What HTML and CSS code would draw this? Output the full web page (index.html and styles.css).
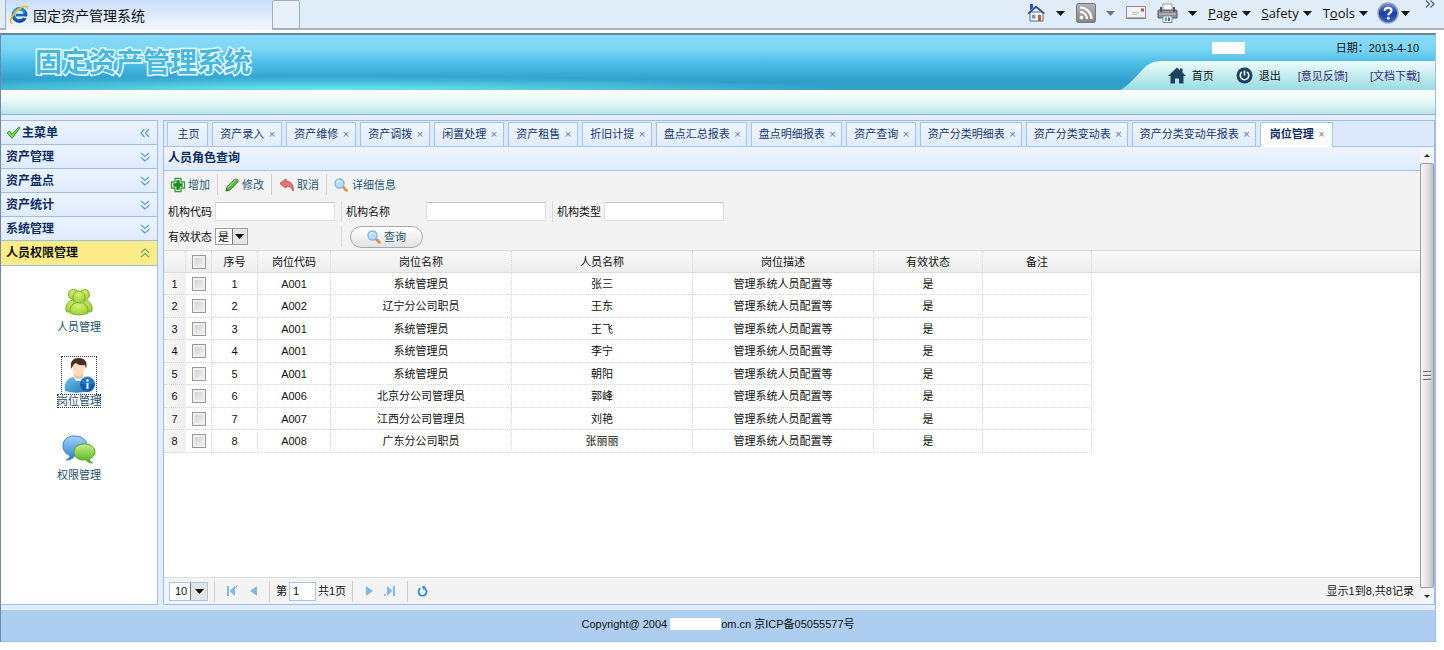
FILE: index.html
```html
<!DOCTYPE html>
<html lang="zh-CN">
<head>
<meta charset="utf-8">
<title>固定资产管理系统</title>
<link rel="stylesheet" href="styles.css">
</head>
<body>
<svg class="defs" aria-hidden="true">
  <defs>
    <radialGradient id="g-ie" cx=".4" cy=".3" r=".8"><stop offset="0" stop-color="#7fd6ff"/><stop offset=".6" stop-color="#1b7fd0"/><stop offset="1" stop-color="#0b3f93"/></radialGradient>
    <linearGradient id="g-help" x1="0" y1="0" x2="0" y2="1"><stop offset="0" stop-color="#6f93dc"/><stop offset=".5" stop-color="#1d3f9f"/><stop offset="1" stop-color="#3568c8"/></linearGradient>
    <linearGradient id="g-grey" x1="0" y1="0" x2="0" y2="1"><stop offset="0" stop-color="#b5b5b5"/><stop offset="1" stop-color="#858585"/></linearGradient>
    <linearGradient id="g-nav" x1="0" y1="0" x2="0" y2="1"><stop offset="0" stop-color="#effcfc"/><stop offset="1" stop-color="#98dce2"/></linearGradient>
    <radialGradient id="g-green" cx=".45" cy=".25" r=".8"><stop offset="0" stop-color="#d5f06c"/><stop offset="1" stop-color="#9ad03a"/></radialGradient>
    <linearGradient id="g-blue" x1="0" y1="0" x2="0" y2="1"><stop offset="0" stop-color="#a4d3f8"/><stop offset="1" stop-color="#2a7bd0"/></linearGradient>
    <linearGradient id="g-chat" x1="0" y1="0" x2="0" y2="1"><stop offset="0" stop-color="#c6ee8c"/><stop offset="1" stop-color="#4fae1c"/></linearGradient>
    <linearGradient id="g-shirt" x1="0" y1="0" x2="1" y2="1"><stop offset="0" stop-color="#6fc3ea"/><stop offset="1" stop-color="#1d74b0"/></linearGradient>
    <symbol id="i-arrow" viewBox="0 0 9 5"><path d="M0 0h9L4.500 5z" fill="currentColor"/></symbol>
    <symbol id="i-down" viewBox="0 0 10 10"><path d="M1 1l4 3.500L9 1M1 5.500L5 9l4-3.500" fill="none" stroke="currentColor" stroke-width="1.200"/></symbol>
    <symbol id="i-find" viewBox="0 0 14 14"><path d="M8.500 8.500l4 4" stroke="#d99345" stroke-width="2.600" stroke-linecap="round"/><circle cx="5.500" cy="5.500" r="4.500" fill="#b5ddfa" stroke="#8cb4dc" stroke-width="1.400"/><path d="M3 5a3 3 0 0 1 3-2.500" fill="none" stroke="#fff" stroke-width="1.200"/></symbol>
  </defs>
</svg>

<header class="browser">
  <div class="browser-tab">
    <svg class="ie" viewBox="0 0 20 20"><circle cx="10.500" cy="10" r="6" fill="none" stroke="url(#g-ie)" stroke-width="3.800"/><path d="M7 8.800h9.500v2.600H7z" fill="#1568b8"/><path d="M13 11.600h6v2l-4-.5z" fill="#dcebfb"/><path d="M3 18.500C-1 17 4 8 10 4c4-3 9-4 8.500 0" fill="none" stroke="#eeb92f" stroke-width="1.700"/></svg>
    <span>固定资产管理系统</span>
  </div>
  <div class="browser-newtab"></div>
  <nav class="browser-tools" aria-label="浏览器">
    <button class="btool"><svg width="20" height="20" viewBox="0 0 20 20"><path d="M4 9h13v9H4z" fill="#f4f6fb" stroke="#5c6678"/><path d="M1.500 10L10 2.500 19 10l-1.500 1L10 5 3 11z" fill="#2f4f9d"/><path d="M4 1h3v4L4 7.500z" fill="#2f4fb3"/><path d="M6 12h3.500v3.500H6z" fill="#6d98c7"/><path d="M12 12h3v6h-3z" fill="#b95f35"/></svg><svg class="caret"><use href="#i-arrow"/></svg></button>
    <button class="btool btool-off"><svg width="20" height="20" viewBox="0 0 20 20"><rect x=".5" y=".5" width="19" height="19" rx="2" fill="url(#g-grey)" stroke="#777"/><circle cx="5.500" cy="14.500" r="1.900" fill="#fff"/><path d="M4 9a7 7 0 0 1 7 7M4 4.500A11.500 11.500 0 0 1 15.500 16" fill="none" stroke="#fff" stroke-width="2.200"/></svg><svg class="caret"><use href="#i-arrow"/></svg></button>
    <button class="btool"><svg width="20" height="20" viewBox="0 0 20 20"><path d="M.5 3.500h19v12H.5z" fill="#f2f2f2" stroke="#8e8e8e"/><path d="M1 15h18" stroke="#777"/><path d="M15 5.500h3v3h-3z" fill="#e14b44"/><path d="M6 9.500h7M6 11.500h5" stroke="#c4c4c4"/></svg></button>
    <button class="btool"><svg width="21" height="20" viewBox="0 0 21 20"><path d="M6 1h9v7H6z" fill="#fdfdfd" stroke="#9b9b9b"/><path d="M1 8q0-1 1-1h17q1 0 1 1v7H1z" fill="#8e8e94" stroke="#5d5d63"/><path d="M3 4h2v5H3zM16 4h2v5h-2z" fill="#55555b"/><path d="M2 11h17" stroke="#c9c9ce"/><path d="M6 13h9v6.500H6z" fill="#f4fbff" stroke="#888"/><path d="M8 14.500h2V18H8z" fill="#38a5c8"/><path d="M11 14.500h2V18h-2z" fill="#3a6fae"/></svg><svg class="caret"><use href="#i-arrow"/></svg></button>
    <button class="btool btool-text"><span><u>P</u>age</span><svg class="caret"><use href="#i-arrow"/></svg></button>
    <button class="btool btool-text"><span><u>S</u>afety</span><svg class="caret"><use href="#i-arrow"/></svg></button>
    <button class="btool btool-text"><span>T<u>o</u>ols</span><svg class="caret"><use href="#i-arrow"/></svg></button>
    <button class="btool btool-help" aria-label="帮助"><svg width="22" height="22" viewBox="0 0 22 22"><circle cx="11" cy="11" r="10" fill="url(#g-help)" stroke="#9aa3b5" stroke-width="1.500"/><path d="M7.800 8.700C7.800 4.800 14.500 4.800 14.500 8.500c0 2.500-3.200 2.400-3.200 4.800" fill="none" stroke="#fff" stroke-width="2.200"/><circle cx="11.300" cy="16.200" r="1.400" fill="#fff"/></svg><svg class="caret"><use href="#i-arrow"/></svg></button>
    <button class="btool btool-more" aria-label="更多"><svg width="10" height="8" viewBox="0 0 10 8"><path d="M1 .5L4.500 4 1 7.500M5.500.5L9 4 5.500 7.500" fill="none" stroke="#4d5c7c" stroke-width="1.200"/></svg></button>
  </nav>
</header>

<div class="app">
  <div class="banner">
    <h1 class="logo">固定资产管理系统</h1>
    <div class="banner-side">
      <div class="who"><span class="mask"></span><span>日期：2013-4-10</span></div>
      <nav class="quick">
        <svg class="quick-bg" viewBox="0 0 314 29" preserveAspectRatio="none"><path d="M0 29C11 21 16 14 23 7Q30 0 40 0H314V29z" fill="url(#g-nav)"/></svg>
        <a class="quick-link" href="#"><svg width="18" height="17" viewBox="0 0 18 17"><path d="M0 9L9 .5l3 2.800V1.500h2.500v4L18 9h-2.500v7.500h-4.500v-5H7v5H2.500V9z" fill="#1c4260"/></svg>首页</a>
        <a class="quick-link" href="#"><svg width="17" height="17" viewBox="0 0 17 17"><circle cx="8.500" cy="8.500" r="8" fill="#1c4260"/><path d="M6 4.900a4.300 4.300 0 1 0 5 0" fill="none" stroke="#e8f8fa" stroke-width="1.600"/><path d="M8.500 3.500v5" stroke="#e8f8fa" stroke-width="1.600"/></svg>退出</a>
        <a class="quick-text" href="#">[意见反馈]</a>
        <a class="quick-text" href="#">[文档下载]</a>
      </nav>
    </div>
  </div>
  <div class="strip"></div>

  <div class="work">
    <aside class="side">
      <button class="acc acc-head"><svg width="15" height="13" viewBox="0 0 15 13"><path d="M1 7L3.500 5l2.300 3L13 1l1.200.8L6 12.300z" fill="#7ad646" stroke="#3f9a34"/></svg><span>主菜单</span><svg class="chev chev-left"><use href="#i-down"/></svg></button>
      <button class="acc"><span>资产管理</span><svg class="chev"><use href="#i-down"/></svg></button>
      <button class="acc"><span>资产盘点</span><svg class="chev"><use href="#i-down"/></svg></button>
      <button class="acc"><span>资产统计</span><svg class="chev"><use href="#i-down"/></svg></button>
      <button class="acc"><span>系统管理</span><svg class="chev"><use href="#i-down"/></svg></button>
      <button class="acc acc-open"><span>人员权限管理</span><svg class="chev chev-up"><use href="#i-down"/></svg></button>
      <div class="shortcuts">
        <a class="short" href="#"><span class="pic"><svg width="28" height="28" viewBox="0 0 28 28"><g fill="url(#g-green)" stroke="#7fae28"><circle cx="8.500" cy="6.500" r="5"/><circle cx="19.500" cy="6.500" r="5"/><path d="M1 23c-1-8 4-11 8-11v12H2zM27 23c1-8-4-11-8-11v12h7z"/><path d="M5.500 25.500C4 18 8 14.500 14 14.500s10 3.500 8.500 11q-8.500 3-17 0z"/><circle cx="14" cy="9" r="6"/></g></svg></span><span class="cap">人员管理</span></a>
        <a class="short short-focus" href="#"><span class="pic"><svg width="32" height="36" viewBox="0 0 32 36"><path d="M2 33c-2-10 5-15 13-14 8 0 12 5 13 13q-13 5-26 1z" fill="url(#g-shirt)"/><path d="M11 15h9v5q-5 4-9 0z" fill="#f1c39c"/><path d="M10 19q5 4 11 0l-2 4h-6z" fill="#dff0fa"/><ellipse cx="15.500" cy="10" rx="6" ry="8" fill="#fbdcc0"/><path d="M8.500 11C6 3 11 0 16 0c6 0 9 4 7 11l-1-4q-6 1-9-2-3 1-4.500 6z" fill="#4a2c20"/><circle cx="24.500" cy="26.500" r="7.500" fill="#0f5fb0"/><path d="M17.500 25a7 7 0 0 1 14 0q-7 3-14 0z" fill="#3c8fd8" opacity=".5"/><path d="M24.500 25v6" stroke="#fff" stroke-width="2"/><circle cx="24.500" cy="22.500" r="1.200" fill="#fff"/></svg></span><span class="cap">岗位管理</span></a>
        <a class="short" href="#"><span class="pic"><svg width="34" height="30" viewBox="0 0 34 30"><path d="M12 1C5 1 1 5.500 1 11c0 4.500 3 8 7 9.500 0 2-1.500 3.500-4 4.500 4 0 7-1.500 8.500-4C20 21 25 17 25 11S20 1 12 1z" fill="url(#g-blue)" stroke="#3a80c8"/><path d="M22.500 9C16 9 12 12.500 12 17s4 8 9.500 8q1 0 2-.2c2 2 4 3.200 7 3.200-2-1-3-2.500-3-4.200 3.500-1.500 5.500-4 5.500-6.800 0-4.500-4-8-10.500-8z" fill="url(#g-chat)" stroke="#54a524"/></svg></span><span class="cap">权限管理</span></a>
      </div>
    </aside>

    <main class="panel">
      <div class="tabs">
        <button class="tab tab-home">主页</button>
        <button class="tab tab-s">资产录入<i>×</i></button>
        <button class="tab tab-s">资产维修<i>×</i></button>
        <button class="tab tab-s">资产调拨<i>×</i></button>
        <button class="tab tab-s">闲置处理<i>×</i></button>
        <button class="tab tab-s">资产租售<i>×</i></button>
        <button class="tab tab-s">折旧计提<i>×</i></button>
        <button class="tab tab-m">盘点汇总报表<i>×</i></button>
        <button class="tab tab-m">盘点明细报表<i>×</i></button>
        <button class="tab tab-s">资产查询<i>×</i></button>
        <button class="tab tab-l">资产分类明细表<i>×</i></button>
        <button class="tab tab-l">资产分类变动表<i>×</i></button>
        <button class="tab tab-xl">资产分类变动年报表<i>×</i></button>
        <button class="tab tab-on">岗位管理<i>×</i></button>
      </div>
      <div class="frame">
        <section class="page">
          <h2 class="title">人员角色查询</h2>
          <div class="tools">
            <button class="tool"><svg width="16" height="16" viewBox="0 0 16 16"><path d="M5 1.500h6V5h3.500v6H11v3.500H5V11H1.500V5H5z" fill="#fff" stroke="#3c9a3c" stroke-width="1.300" stroke-linejoin="round"/><path d="M6.300 3.300h3.400v3h3v3.400h-3v3H6.300v-3h-3V6.300h3z" fill="#1c8c1c"/></svg>增加</button>
            <button class="tool tool-edit"><svg width="14" height="14" viewBox="0 0 14 14"><path d="M1 13l1-4 7.500-7.500q2-1 3 0t.2 2.700L5 12z" fill="#62b846" stroke="#2f8425"/><path d="M3 9.500l8-8" stroke="#b5e49f"/><path d="M1 13l.6-2 1.400 1.300z" fill="#333"/></svg>修改</button>
            <button class="tool"><svg width="16" height="14" viewBox="0 0 16 14"><path d="M1 5.500L7 1v2.300c5 .2 8 4 7 9.700-1-3.500-3-5-7-5V10z" fill="#ea7a74" stroke="#bf4540"/></svg>取消</button>
            <button class="tool tool-info"><svg width="14" height="14"><use href="#i-find"/></svg>详细信息</button>
          </div>
          <form class="query">
            <div class="cell cell-a"><label for="code">机构代码</label><input class="text" id="code" type="text"></div>
            <div class="cell cell-b"><label for="name">机构名称</label><input class="text" id="name" type="text"></div>
            <div class="cell cell-c"><label for="type">机构类型</label><input class="text" id="type" type="text"></div>
            <div class="cell cell-a"><label for="valid">有效状态</label><span class="pick"><select id="valid"><option>是</option><option>否</option></select><svg><use href="#i-arrow"/></svg></span></div>
            <div class="cell cell-go"><button class="go" type="button"><svg width="14" height="14"><use href="#i-find"/></svg>查询</button></div>
          </form>
          <div class="grid">
            <table>
              <colgroup><col class="c-n"><col class="c-k"><col class="c-i"><col class="c-code"><col class="c-w"><col class="c-w"><col class="c-w"><col class="c-v"><col class="c-v"><col></colgroup>
              <thead><tr><th></th><th><input type="checkbox" aria-label="全选"></th><th>序号</th><th>岗位代码</th><th>岗位名称</th><th>人员名称</th><th>岗位描述</th><th>有效状态</th><th>备注</th><th class="rest"></th></tr></thead>
              <tbody>
                <tr><td>1</td><td><input type="checkbox" aria-label="选择 1"></td><td>1</td><td>A001</td><td>系统管理员</td><td>张三</td><td>管理系统人员配置等</td><td>是</td><td></td></tr>
                <tr><td>2</td><td><input type="checkbox" aria-label="选择 2"></td><td>2</td><td>A002</td><td>辽宁分公司职员</td><td>王东</td><td>管理系统人员配置等</td><td>是</td><td></td></tr>
                <tr><td>3</td><td><input type="checkbox" aria-label="选择 3"></td><td>3</td><td>A001</td><td>系统管理员</td><td>王飞</td><td>管理系统人员配置等</td><td>是</td><td></td></tr>
                <tr><td>4</td><td><input type="checkbox" aria-label="选择 4"></td><td>4</td><td>A001</td><td>系统管理员</td><td>李宁</td><td>管理系统人员配置等</td><td>是</td><td></td></tr>
                <tr><td>5</td><td><input type="checkbox" aria-label="选择 5"></td><td>5</td><td>A001</td><td>系统管理员</td><td>朝阳</td><td>管理系统人员配置等</td><td>是</td><td></td></tr>
                <tr><td>6</td><td><input type="checkbox" aria-label="选择 6"></td><td>6</td><td>A006</td><td>北京分公司管理员</td><td>郭峰</td><td>管理系统人员配置等</td><td>是</td><td></td></tr>
                <tr><td>7</td><td><input type="checkbox" aria-label="选择 7"></td><td>7</td><td>A007</td><td>江西分公司管理员</td><td>刘艳</td><td>管理系统人员配置等</td><td>是</td><td></td></tr>
                <tr><td>8</td><td><input type="checkbox" aria-label="选择 8"></td><td>8</td><td>A008</td><td>广东分公司职员</td><td>张丽丽</td><td>管理系统人员配置等</td><td>是</td><td></td></tr>
              </tbody>
            </table>
          </div>
          <div class="pager">
            <span class="pick pick-size"><select aria-label="每页条数"><option>10</option><option>20</option></select><svg><use href="#i-arrow"/></svg></span>
            <span class="sep"></span>
            <button class="pg pg-wide" aria-label="首页"><svg width="12" height="12" viewBox="0 0 12 12"><path d="M1 1h2v10H1zM9 1v10L3.500 6z" fill="#7fb9e6"/><path d="M9.500 2.500l2-1.500" stroke="#777"/></svg></button>
            <button class="pg" aria-label="上一页"><svg width="7" height="10" viewBox="0 0 7 10"><path d="M7 0v10L0 5z" fill="#7fb9e6"/></svg></button>
            <span class="sep"></span>
            <label class="pageno">第<input type="text" value="1">共1页</label>
            <span class="sep"></span>
            <button class="pg" aria-label="下一页"><svg width="7" height="10" viewBox="0 0 7 10"><path d="M0 0v10l7-5z" fill="#7fb9e6"/></svg></button>
            <button class="pg pg-wide" aria-label="末页"><svg width="12" height="12" viewBox="0 0 12 12"><path d="M9 1h2v10H9zM3 1v10l5.500-5z" fill="#7fb9e6"/><path d="M0 10h2" stroke="#777"/></svg></button>
            <span class="sep"></span>
            <button class="pg" aria-label="刷新"><svg width="11" height="11" viewBox="0 0 11 11"><path d="M3.500 2.300a4 4 0 1 0 4 0" fill="none" stroke="#2f83c9" stroke-width="1.700"/><path d="M5 0l4 .5L6.500 4z" fill="#2f83c9"/></svg></button>
            <span class="total">显示1到8,共8记录</span>
          </div>
        </section>
        <div class="scroll"><span class="nub"><svg width="6" height="3" viewBox="0 0 6 3"><path d="M0 3h6L3 0z" fill="#333"/></svg></span><span class="thumb"><i></i><i></i><i></i></span><span class="nub"><svg width="6" height="3" viewBox="0 0 6 3"><path d="M0 0h6L3 3z" fill="#333"/></svg></span></div>
      </div>
    </main>
  </div>

  <footer class="foot"><span>Copyright@ 2004</span><span class="mask"></span><span>om.cn 京ICP备05055577号</span></footer>
</div>
</body>
</html>
```
FILE: styles.css
```css
* { box-sizing: border-box; }
body {
  margin: 0;
  background: #fff;
  font: 11px/14px "Liberation Sans", "Noto Sans CJK SC", sans-serif;
  color: #111;
  display: flex;
  flex-direction: column;
  min-height: 100vh;
}
button, input, select { font: inherit; color: inherit; margin: 0; }
button { border: 0; background: none; padding: 0; display: flex; align-items: center; }
a { color: inherit; text-decoration: none; }
svg { flex: none; display: block; }
.defs { position: absolute; width: 0; height: 0; }

/* browser chrome */
.browser {
  display: flex;
  height: 33px;
  padding: 0 9px 3px 5px;
  background: linear-gradient(#e1ecf9 0 28px, #a9b3c2 28px 30px, #fff 30px);
}
.browser-tab {
  width: 267px;
  height: 30px;
  padding-left: 3px;
  display: flex;
  align-items: center;
  gap: 4px;
  border-left: 1px solid #a3adbb;
  background: linear-gradient(#c9defa, #f3f8fe);
  font: 14px/20px "Noto Sans CJK SC", sans-serif;
}
.ie { width: 20px; height: 20px; }
.browser-newtab {
  width: 28px;
  height: 29px;
  border: 1px solid #a3adbb;
  border-radius: 2px;
  background: #e8f0fa;
}
.browser-tools {
  flex: 1;
  height: 26px;
  display: flex;
  justify-content: flex-end;
  align-items: center;
  gap: 11px;
}
.btool { gap: 10px; font: 13px/18px "Open Sans", sans-serif; }
.btool-text { gap: 4px; }
.btool-help { gap: 2px; margin-left: -2px; }
.btool-off .caret { color: #777; }
.btool-more { align-self: flex-start; margin-left: 4px; }
.caret { width: 9px; height: 5px; color: #111; }

/* page shell */
.app {
  flex: 1;
  display: flex;
  flex-direction: column;
  margin: 0 8px 8px 0;
  border: 1px solid #9dbde0;
  border-top: 2px solid #6b8298;
  border-left-color: #7088aa;
  background: #e3edfb;
}
.banner {
  height: 55px;
  display: flex;
  justify-content: space-between;
  background:
    radial-gradient(ellipse 500px 14px at 330px 100%, #6ae9f2, transparent),
    linear-gradient(#86dcf9, #7dd5f4 25%, #4dbfe6 50%, #2d9dca 85%, #35a3c8);
}
.logo {
  margin: 7px 0 0 34px;
  font: 700 27px/38px "Noto Sans CJK SC", sans-serif;
  color: #48b7de;
  -webkit-text-stroke: 3px #e6f9ff;
  paint-order: stroke fill;
}
.banner-side { display: flex; flex-direction: column; align-items: flex-end; }
.who { height: 26px; padding-right: 16px; display: flex; align-items: center; gap: 91px; }
.mask { background: #fff; width: 33px; height: 12px; }
.quick {
  position: relative;
  width: 314px;
  height: 29px;
  padding-right: 15px;
  display: flex;
  justify-content: flex-end;
  align-items: center;
  gap: 22px;
}
.quick-bg { position: absolute; inset: 0; width: 100%; height: 100%; }
.quick-link { position: relative; display: flex; align-items: center; gap: 6px; }
.quick-text { position: relative; color: #3d2a78; }
.quick-text:nth-of-type(3) { margin-left: -5px; }
.strip {
  height: 25px;
  border-bottom: 1px solid #8fb4c4;
  background: linear-gradient(#fdffff, #e6f7f7 50%, #b7e3e8);
}
.work { flex: 1; display: flex; gap: 5px; margin: 5px 0; }

/* accordion menu */
.side {
  width: 157px;
  border: 1px solid #9dbfe6;
  border-left: 0;
  background: #fff;
}
.acc {
  width: 100%;
  height: 24px;
  padding: 0 7px 0 5px;
  justify-content: space-between;
  border-bottom: 1px solid #9dbfe6;
  background: linear-gradient(#ecf3fe, #dfebfd);
  font-weight: 700;
  font-size: 12px;
  color: #0e2d5f;
}
.acc-head { gap: 1px; justify-content: flex-start; }
.acc-head .chev { margin-left: auto; }
.acc-open { height: 25px; background: #fbec88; color: #111; }
.chev { width: 10px; height: 10px; color: #5f9fd6; }
.chev-left { transform: rotate(90deg); }
.chev-up { transform: rotate(180deg); color: #7aa05c; }
.shortcuts { padding-top: 16px; display: flex; flex-direction: column; align-items: center; gap: 22px; }
.short { display: flex; flex-direction: column; align-items: center; color: #1c4f70; }
.pic { height: 38px; padding: 0 1px; display: flex; align-items: center; border: 1px solid transparent; border-bottom: 0; }
.cap { height: 14px; }
.short-focus .pic { border: 1px dotted #333; border-bottom: 0; }
.short-focus .cap { outline: 1px dotted #333; outline-offset: -1px; }

/* tab strip */
.panel { flex: 1; min-width: 0; display: flex; flex-direction: column; border: 1px solid #9dbfe6; }
.tabs { height: 26px; padding: 1px 0 0 3px; display: flex; gap: 4px; background: #deeafc; border-bottom: 1px solid #a6c5ec; }
.tab {
  height: 24px;
  flex: none;
  justify-content: center;
  padding: 0 0 2px 2px;
  gap: 4px;
  border: 1px solid #a6c5ec;
  border-bottom: 0;
  background: linear-gradient(#f1f6ff, #dfebfd);
  color: #16386c;
}
.tab i { font: 9px/14px "DejaVu Sans", sans-serif; color: #4f7ab2; }
.tab-home { width: 41px; }
.tab-s { width: 70px; }
.tab-m { width: 91px; }
.tab-l { width: 102px; }
.tab-xl { width: 124px; }
.tab-on { width: 73px; height: 25px; background: #fff; font-weight: 700; color: #0e2d5f; }

.frame { flex: 1; display: flex; background: #fff; }
.page { flex: 1; min-width: 0; display: flex; flex-direction: column; }
.title {
  margin: 0;
  height: 24px;
  padding-left: 4px;
  font-size: 12px;
  line-height: 22px;
  color: #0e2d5f;
  background: linear-gradient(#eff5ff, #dfebfd);
  border-bottom: 1px solid #a6c5ec;
}
.tools { display: flex; height: 28px; padding: 3px 0 4px 6px; background: #f3f3f3; color: #1d5873; }
.tool { padding-right: 7px; gap: 2px; border-right: 1px solid #d0d0d0; }
.tool + .tool { padding-left: 7px; }
.tool-edit { gap: 3px; }
.tool-info { border-right: 0; gap: 4px; }
.query {
  display: grid;
  grid-template-columns: 178px 211px 1fr;
  grid-auto-rows: 25px;
  padding-bottom: 1px;
  background: #f3f3f3;
  border-bottom: 1px solid #dcdcdc;
}
.cell { display: flex; align-items: center; padding-left: 4px; margin: 2px 0; }
.cell-a { border-right: 1px solid #d8d8d8; gap: 3px; }
.cell-b { border-right: 1px solid #d8d8d8; justify-content: space-between; padding-right: 6px; }
.cell-c { gap: 3px; }
.cell-go { padding-left: 8px; }
.text { width: 120px; height: 19px; border: 1px solid #dedede; border-top-color: #c4c4c4; background: #fff; }
.pick { position: relative; display: flex; }
.pick select {
  appearance: none;
  width: 33px;
  height: 17px;
  padding: 0 0 0 2px;
  border: 1px solid #9f9f9f;
  border-radius: 0;
  background: linear-gradient(90deg, #fff 50%, #777 50% 54%, #e4e4e4 54%);
}
.pick svg { position: absolute; right: 4px; top: 6px; width: 9px; height: 5px; pointer-events: none; }
.go {
  width: 73px;
  height: 22px;
  flex: none;
  justify-content: center;
  gap: 3px;
  border: 1px solid #a9a9a9;
  border-radius: 11px;
  background: linear-gradient(#fff, #e2e2e2);
  color: #1d5873;
}

/* data table */
.grid { flex: 1; }
table { width: 100%; table-layout: fixed; border-collapse: separate; border-spacing: 0; }
.c-n { width: 22px; }
.c-k { width: 26px; }
.c-i { width: 46px; }
.c-code { width: 73px; }
.c-w { width: 181px; }
.c-v { width: 109px; }
th, td { height: 22px; padding: 0; text-align: center; border-right: 1px dotted #d8d8d8; border-bottom: 1px dotted #d8d8d8; }
th { font-weight: 400; background: linear-gradient(#f9f9f9, #ededed); border-bottom: 1px solid #ddd; }
.rest { border-right: 0; }
tbody tr:nth-child(even) td { height: 23px; }
td:first-child { background: linear-gradient(90deg, #f6f6f6, #efefef); border-right-color: #efefef; }
input[type="checkbox"] {
  appearance: none;
  display: block;
  width: 14px;
  height: 14px;
  margin: 0 auto;
  border: 1px solid #9a9a9a;
  background: linear-gradient(135deg, #c9cbce, #f6f6f6);
  box-shadow: inset 0 0 0 2px #efefef;
}

/* pager */
.pager { height: 27px; padding: 0 6px 0 5px; display: flex; align-items: center; background: #f3f3f3; border-top: 1px solid #dcdcdc; }
.pick-size select { width: 39px; height: 19px; padding-left: 5px; border-color: #a6c5ec; background: linear-gradient(90deg, #fff 54%, #777 54% 57%, #e4e4e4 57%); }
.pick-size svg { top: 7px; }
.sep { width: 1px; height: 21px; margin: 0 6px; background: #ccc; }
.pg { width: 20px; height: 20px; justify-content: center; }
.pg-wide { width: 22px; }
.pg:last-of-type { margin-left: -2px; }
.pageno { display: flex; align-items: center; gap: 2px; }
.pageno input { width: 27px; height: 19px; padding: 0 3px; border: 1px solid #a6c5ec; }
.total { margin-left: auto; }

/* scroll bar */
.scroll { width: 14px; display: flex; flex-direction: column; background: #eee; }
.nub { height: 16px; display: flex; align-items: center; justify-content: center; background: #f4f4f4; }
.thumb {
  flex: 1;
  display: flex;
  flex-direction: column;
  align-items: center;
  justify-content: center;
  gap: 2px;
  border: 1px solid #9b9b9b;
  border-radius: 2px;
  background: linear-gradient(90deg, #f6f6f6, #e3e3e3 50%, #c3c3c8);
}
.thumb i { width: 8px; height: 2px; background: #666; border-bottom: 1px solid #fff; }

.foot {
  height: 31px;
  padding-bottom: 4px;
  display: flex;
  align-items: center;
  justify-content: center;
  background: #adcef0;
}
.foot .mask { width: 51px; margin-left: 3px; }
```
